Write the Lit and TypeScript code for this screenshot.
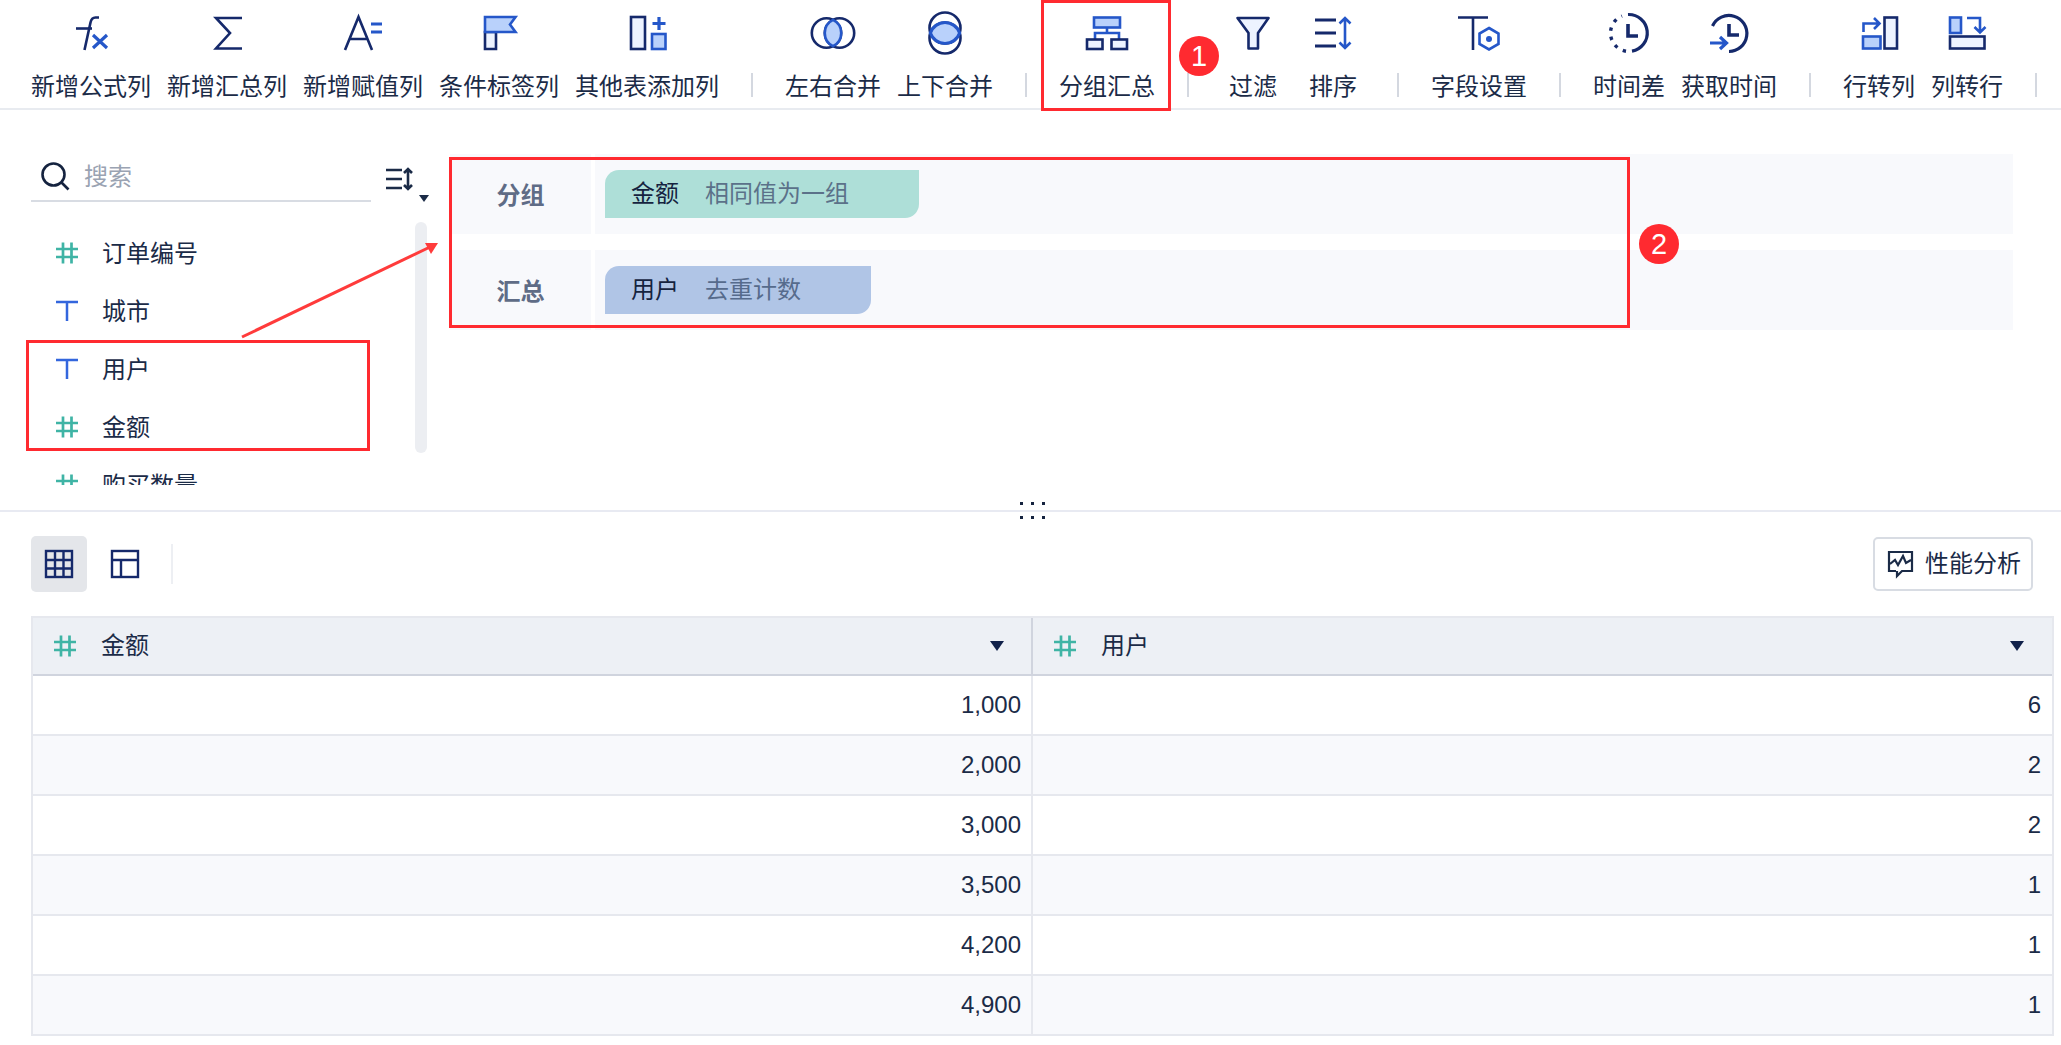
import { LitElement, html, svg, css } from "lit";
import { customElement } from "lit/decorators.js";

const box = (inner: unknown) => html`<svg class="ic" width="40" height="40" viewBox="0 0 40 40">${inner}</svg>`;

const icons: Record<string, unknown> = {
  fx: box(svg`
    <path class="n" d="M28 4.500 h-3.500 q-4 0 -5 5 L13.500 37"/><path class="n" d="M5 15.500 H21"/>
    <path class="b w3" d="M22 22 L36 35 M36 22 L22 35"/>`),
  sum: box(svg`<path class="n" d="M35 5 H9 L23 20 L9 35.500 H35"/>`),
  assign: box(svg`
    <path class="n" d="M2 37 L15.500 4 L29 37 M7 26 H24"/>
    <path class="b w3" d="M28 11 H39 M28 19 H39"/>`),
  flag: box(svg`
    <path class="n fl" d="M6 19 H17 V36 H6 Z"/>
    <path class="b fm" d="M6 4 H36.500 L31 11.500 L36.500 19 H6 Z"/>`),
  extra: box(svg`
    <rect class="n fl" x="4" y="4" width="14" height="32"/>
    <path class="b w3" d="M32 4 V17 M25.500 10.500 H38.500"/>
    <rect class="b fm" x="25" y="21" width="13.500" height="15"/>`),
  lr: box(svg`
    <circle class="n" cx="13.500" cy="20" r="14.700"/><circle class="n" cx="26.500" cy="20" r="14.700"/>
    <path class="b fm" d="M20 6.800 A14.700 14.700 0 0 1 20 33.200 A14.700 14.700 0 0 1 20 6.800 Z"/>`),
  ud: box(svg`
    <circle class="n" cx="20" cy="15" r="15.500"/><circle class="n" cx="20" cy="25" r="15.500"/>
    <path class="b fm w3" d="M5.330 20 A15.500 15.500 0 0 1 34.670 20 A15.500 15.500 0 0 1 5.330 20 Z"/>`),
  group: box(svg`
    <rect class="b fm" x="7" y="4.500" width="26" height="10"/>
    <path class="b" d="M20 14.500 V20 M8 26 V20 H32 V26"/>
    <rect class="n fl" x="0" y="26.500" width="15.500" height="9.500"/>
    <rect class="n fl" x="24.500" y="26.500" width="15.500" height="9.500"/>`),
  filter: box(svg`<path class="n fl lj" d="M4.500 5 H35.500 L25 20 V35.500 H15.500 V20 Z"/>`),
  sort: box(svg`
    <path class="n w3" d="M2 7 H23 M2 20 H23 M2 33 H23"/>
    <path class="b" d="M32 5 V35 M26.500 10.500 L32 5 L37.500 10.500 M26.500 29.500 L32 35 L37.500 29.500"/>`),
  field: box(svg`
    <path class="n" d="M-1 4.500 H29 M14 4.500 V37"/>
    <path class="b" d="M30 15 L39.500 20.500 V31 L30 36.500 L20.500 31 V20.500 Z"/>
    <circle class="bf" cx="30" cy="26" r="3"/>`),
  diff: box(svg`
    <path class="n w3" d="M19 1.500 A18.500 18.500 0 0 1 23 38.200"/>
    <path class="n dots" d="M17 38.300 A18.500 18.500 0 0 1 1.500 20 A18.500 18.500 0 0 1 13 3"/>
    <path class="n w4" d="M19 11 V23 H29"/>`),
  gettime: box(svg`
    <path class="n w3" d="M3.500 13 A18 18 0 1 1 20 38.500"/>
    <path class="n w4" d="M20 11 V22 H30"/>
    <path class="b w3" d="M1 30 H17 M11 24 L17.500 30 L11 36"/>`),
  r2c: box(svg`
    <rect class="n fl" x="25.500" y="4.500" width="12.500" height="31"/>
    <rect class="b fm" x="4" y="23.500" width="17.500" height="12"/>
    <path class="b" d="M4.500 19 V10.500 H20 M15 5 L20.500 10.500 L15 16"/>`),
  c2r: box(svg`
    <rect class="b fm" x="3" y="4.500" width="11" height="15.500"/>
    <rect class="n fl" x="3" y="23.500" width="34.500" height="12"/>
    <path class="b" d="M20 5 H33 V19 M27.500 14 L33 19.500 L38.500 14"/>`),
};

const groups = [
  [["fx", "新增公式列"], ["sum", "新增汇总列"], ["assign", "新增赋值列"], ["flag", "条件标签列"], ["extra", "其他表添加列"]],
  [["lr", "左右合并"], ["ud", "上下合并"]],
  [["group", "分组汇总"]],
  [["filter", "过滤"], ["sort", "排序"]],
  [["field", "字段设置"]],
  [["diff", "时间差"], ["gettime", "获取时间"]],
  [["r2c", "行转列"], ["c2r", "列转行"]],
];

const hash = html`<svg class="ti" width="22" height="22" viewBox="0 0 22 22"><path class="h" d="M7 0.500 V21.500 M15.500 0.500 V21.500 M0 7 H22 M0 15 H22"/></svg>`;
const tee = html`<svg class="ti" width="22" height="22" viewBox="0 0 22 22"><path class="t" d="M0 2 H22 M11 2 V21"/></svg>`;

const fields = [
  [hash, "订单编号"],
  [tee, "城市"],
  [tee, "用户"],
  [hash, "金额"],
  [hash, "购买数量"],
];

const rows = [
  ["1,000", "6"],
  ["2,000", "2"],
  ["3,000", "2"],
  ["3,500", "1"],
  ["4,200", "1"],
  ["4,900", "1"],
];

@customElement("app-root")
export class AppRoot extends LitElement {
  static styles = css`
    :host {
      display: block;
      position: relative;
      width: 2061px;
      height: 1045px;
      overflow: hidden;
      background: #fff;
      color: #1b2b47;
      font-family: "Liberation Sans", "Noto Sans CJK SC", sans-serif;
      font-size: 24px;
    }
    svg { display: block; overflow: visible; }
    svg path, svg rect, svg circle { fill: none; stroke-width: 2.6; }
    .n { stroke: #15296b; }
    .b { stroke: #2557c9; }
    svg .fl { fill: #edf3ff; }
    svg .fm { fill: #b9d1fb; }
    svg .bf { fill: #2557c9; stroke: none; }
    svg .w3 { stroke-width: 3.2; }
    svg .w4 { stroke-width: 3.6; }
    svg .dots { stroke-dasharray: 3.4 6; stroke-width: 3.4; }
    .lj { stroke-linejoin: round; }
    svg .h { stroke: #3fb4a5; stroke-width: 2.7; }
    svg .t { stroke: #3366dd; stroke-width: 2.5; }

    .toolbar {
      display: flex;
      height: 108px;
      box-sizing: content-box;
      padding-left: 31px;
      border-bottom: 2px solid #e8ebf0;
    }
    .group { display: flex; gap: 16px; flex: none; }
    .item {
      display: flex;
      flex-direction: column;
      align-items: center;
      min-width: 64px;
      padding-top: 13px;
    }
    .label { margin-top: 22px; line-height: 24px; white-space: nowrap; }
    .ic { flex: none; }
    .sep {
      flex: none;
      width: 2px;
      height: 24px;
      margin: 73px 32px 0 32px;
      background: #d4d8e0;
    }

    .main { display: flex; height: 400px; border-bottom: 2px solid #e8eaf2; }
    .side { width: 450px; flex: none; padding-left: 31px; box-sizing: border-box; }
    .searchrow { display: flex; margin-top: 42px; }
    .search {
      display: flex;
      align-items: center;
      width: 330px;
      height: 48px;
      border-bottom: 2px solid #d8dce3;
      padding-left: 10px;
      gap: 15px;
    }
    .ph { color: #9aa3b2; line-height: 24px; padding-top: 2px; }
    .search svg { margin-bottom: 1px; }
    .sorter { display: flex; margin: 15px 0 0 15px; }
    .sorter svg { width: 27px; height: 24px; }
    .sorter i {
      display: block;
      width: 0;
      height: 0;
      margin: 28px 0 0 6px;
      border: 5px solid transparent;
      border-top: 7px solid #1b2b47;
      border-bottom: 0;
    }
    .sorter path { stroke: #1b2b47; stroke-width: 2.6; }
    .listrow { display: flex; margin-top: 22px; }
    .list { width: 340px; height: 261px; overflow: hidden; }
    .fitem { display: flex; align-items: center; gap: 24px; height: 58px; padding-left: 25px; flex: none; }
    .fitem span { line-height: 24px; padding-top: 2px; }
    .scroll {
      width: 12px;
      height: 231px;
      margin: -2px 0 0 44px;
      border-radius: 6px;
      background: #eceef2;
    }

    .config {
      width: 1563px;
      display: flex;
      flex-direction: column;
      gap: 16px;
      margin-top: 44px;
    }
    .crow { display: flex; gap: 4px; height: 80px; }
    .clabel {
      width: 141px;
      background: #f8f9fc;
      font-weight: 700;
      color: #5f6c86;
      text-align: center;
      line-height: 84px;
      flex: none;
    }
    .cval { flex: 1; background: #f8f9fc; padding: 16px 10px; }
    .chip {
      display: inline-flex;
      height: 48px;
      line-height: 48px;
      padding: 0 70px 0 26px;
      gap: 26px;
      border-radius: 14px 0 14px 0;
      color: #15233f;
    }
    .chip em { font-style: normal; color: #5b7189; }
    .chip.g { background: #aedfd8; }
    .chip.u { background: #b0c5e6; }
    .chip.u em { color: #566b8c; }

    .bar { display: flex; align-items: center; height: 56px; margin: 24px 0 24px 31px; padding-right: 28px; }
    .vbtn { width: 56px; height: 56px; display: flex; align-items: center; justify-content: center; border-radius: 5px; }
    .vbtn.on { background: #e4e6ea; }
    .vbtn + .vbtn { margin-left: 10px; }
    .vsep { width: 2px; height: 40px; margin-left: 18px; background: #edeff3; }
    .vbtn path, .vbtn rect { stroke: #15296b; stroke-width: 2.4; }
    .perf {
      display: flex;
      align-items: center;
      gap: 12px;
      margin-left: auto;
      width: 160px;
      height: 54px;
      padding-left: 13px;
      box-sizing: border-box;
      border: 2px solid #d8dce3;
      border-radius: 5px;
    }
    .perf span { line-height: 24px; margin-top: -1px; }
    .perf path { stroke: #1b2b47; stroke-width: 2.2; }

    .table {
      margin-left: 31px;
      width: 2023px;
      box-sizing: border-box;
      border: solid #e6e8ee;
      border-width: 2px 2px 0;
    }
    .tr { display: grid; grid-template-columns: 1000px 1fr; height: 60px; }
    .tr.head { height: 58px; background: #edf0f5; }
    .td {
      box-sizing: border-box;
      border-bottom: 2px solid #e6e8ee;
      display: flex;
      align-items: center;
      justify-content: flex-end;
      padding-right: 11px;
    }
    .td:first-child { border-right: 2px solid #e6e8ee; padding-right: 10px; }
    .tr.alt { background: #f8f9fc; }
    .head .td { justify-content: flex-start; border-bottom-color: #d0d4de; padding: 0 28px 0 21px; gap: 25px; }
    .head .td:first-child { border-right-color: #d0d4de; padding-right: 27px; }
    .head span { line-height: 24px; }
    .head i {
      margin-left: auto;
      width: 0;
      height: 0;
      border: 7px solid transparent;
      border-top: 10px solid #10214a;
      border-bottom: 0;
    }

    .mark { position: absolute; box-sizing: border-box; border: 3px solid #ff2a30; }
    .m1 { left: 1041px; top: 0; width: 130px; height: 111px; }
    .m2 { left: 449px; top: 157px; width: 1181px; height: 171px; }
    .m3 { left: 26px; top: 340px; width: 344px; height: 111px; }
    .badge {
      position: absolute;
      width: 40px;
      height: 40px;
      border-radius: 50%;
      background: #ff2a30;
      color: #fff;
      font-size: 29px;
      line-height: 40px;
      text-align: center;
    }
    .b1 { left: 1179px; top: 36px; }
    .b2 { left: 1639px; top: 224px; }
    .arrow { position: absolute; left: 0; top: 0; pointer-events: none; }
    .arrow path { stroke: #ff3b3b; stroke-width: 3; }
    .arrow .head { fill: #ff3b3b; stroke: none; }
    .handle {
      position: absolute;
      left: 1020px;
      top: 502px;
      display: grid;
      grid-template-columns: repeat(3, 3px);
      grid-auto-rows: 3px;
      column-gap: 8px;
      row-gap: 11px;
    }
    .handle b { background: #15233f; }
  `;

  render() {
    return html`
      <div class="toolbar">
        ${groups.map(
          (g, i) => html`
            ${i ? html`<div class="sep"></div>` : ""}
            <div class="group">
              ${g.map(([ic, t]) => html`<div class="item">${icons[ic]}<div class="label">${t}</div></div>`)}
            </div>`
        )}
        <div class="sep"></div>
      </div>

      <div class="main">
        <div class="side">
          <div class="searchrow">
            <div class="search">
              <svg width="28" height="28" viewBox="0 0 28 28"><circle cx="12.500" cy="12.500" r="11" style="stroke:#15233f"/><path d="M20.500 20.500 L27.500 27.500" style="stroke:#15233f"/></svg>
              <span class="ph">搜索</span>
            </div>
            <div class="sorter">
              <svg viewBox="0 0 27 24"><path d="M0 3 H16 M0 12 H16 M0 21 H16 M22 2 V22 M18 6 L22 2 L26 6 M18 18 L22 22 L26 18"/></svg>
              <i></i>
            </div>
          </div>
          <div class="listrow">
            <div class="list">
              ${fields.map(([ic, t]) => html`<div class="fitem">${ic}<span>${t}</span></div>`)}
            </div>
            <div class="scroll"></div>
          </div>
        </div>
        <div class="config">
          <div class="crow">
            <div class="clabel">分组</div>
            <div class="cval"><div class="chip g"><span>金额</span><em>相同值为一组</em></div></div>
          </div>
          <div class="crow">
            <div class="clabel">汇总</div>
            <div class="cval"><div class="chip u"><span>用户</span><em>去重计数</em></div></div>
          </div>
        </div>
      </div>

      <div class="bar">
        <div class="vbtn on">
          <svg width="28" height="28" viewBox="0 0 28 28"><rect x="1" y="1" width="26" height="26"/><path d="M10 1 V27 M18.500 1 V27 M1 10 H27 M1 18.500 H27"/></svg>
        </div>
        <div class="vbtn">
          <svg width="28" height="28" viewBox="0 0 28 28"><rect x="1" y="1" width="26" height="26"/><path d="M1 10 H27 M10 10 V27"/></svg>
        </div>
        <div class="vsep"></div>
        <div class="perf">
          <svg width="25" height="26" viewBox="0 0 25 26"><path d="M8 20 H1 V1 H24 V20 H14 L9 25 V20 M2 13 L7 9 L10 14 L15 5 L18 12 L23 9"/></svg>
          <span>性能分析</span>
        </div>
      </div>

      <div class="table">
        <div class="tr head">
          <div class="td">${hash}<span>金额</span><i></i></div>
          <div class="td">${hash}<span>用户</span><i></i></div>
        </div>
        ${rows.map(
          (r, i) => html`
            <div class="tr ${i % 2 ? "alt" : ""}">
              <div class="td">${r[0]}</div>
              <div class="td">${r[1]}</div>
            </div>`
        )}
      </div>

      <div class="mark m1"></div>
      <div class="mark m2"></div>
      <div class="mark m3"></div>
      <div class="badge b1">1</div>
      <div class="badge b2">2</div>
      <svg class="arrow" width="2061" height="1045" viewBox="0 0 2061 1045">
        <path d="M242 337 L430 247"/>
        <path class="head" d="M438 243 L425 243 L431 254 Z"/>
      </svg>
      <div class="handle"><b></b><b></b><b></b><b></b><b></b><b></b></div>
    `;
  }
}
